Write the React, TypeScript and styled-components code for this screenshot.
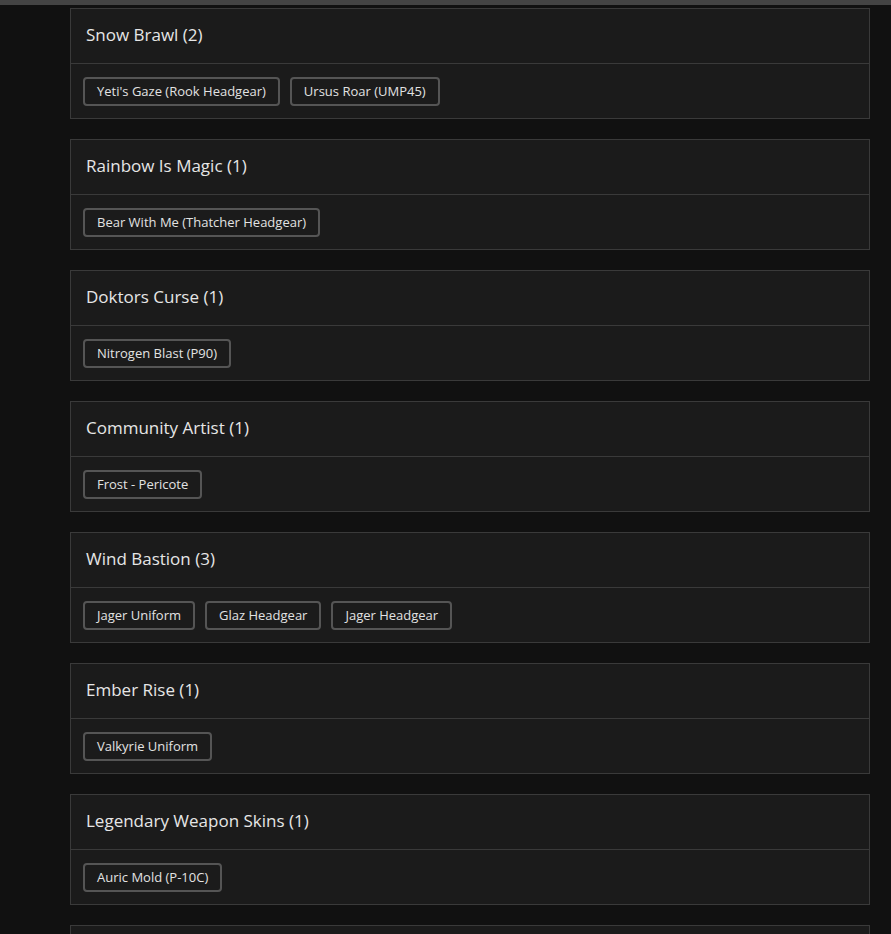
import React from 'react';
import styled, { createGlobalStyle } from 'styled-components';

const GlobalStyle = createGlobalStyle`
  html, body {
    margin: 0;
    padding: 0;
    background: #111111;
    font-family: 'Open Sans', 'Liberation Sans', sans-serif;
  }
`;

interface Collection {
  name: string;
  items: string[];
}

const collections: Collection[] = [
  { name: 'Snow Brawl', items: ["Yeti's Gaze (Rook Headgear)", 'Ursus Roar (UMP45)'] },
  { name: 'Rainbow Is Magic', items: ['Bear With Me (Thatcher Headgear)'] },
  { name: 'Doktors Curse', items: ['Nitrogen Blast (P90)'] },
  { name: 'Community Artist', items: ['Frost - Pericote'] },
  { name: 'Wind Bastion', items: ['Jager Uniform', 'Glaz Headgear', 'Jager Headgear'] },
  { name: 'Ember Rise', items: ['Valkyrie Uniform'] },
  { name: 'Legendary Weapon Skins', items: ['Auric Mold (P-10C)'] },
  { name: 'Shifting Tides', items: ['Kaid Uniform'] },
];

const TopBar = styled.div`
  height: 5px;
  background: #444444;
  margin-bottom: 3px;
`;

const List = styled.div`
  display: flex;
  flex-direction: column;
  gap: 20px;
  width: 800px;
  margin-left: 70px;
`;

const Card = styled.section`
  background: #1b1b1b;
  border: 1px solid #3a3a3a;
`;

const Header = styled.div`
  height: 55px;
  box-sizing: border-box;
  display: flex;
  align-items: center;
  padding: 0 15px 3px;
  border-bottom: 1px solid #3a3a3a;

  h3 {
    margin: 0;
    font-size: 17px;
    font-weight: 500;
    color: #e6e6e6;
  }
`;

const Body = styled.div`
  height: 54px;
  box-sizing: border-box;
  display: flex;
  align-items: center;
  gap: 10px;
  padding: 0 12px;
`;

const Chip = styled.span`
  height: 29px;
  box-sizing: border-box;
  display: inline-flex;
  align-items: center;
  padding: 0 12px 1px;
  border: 2px solid #555555;
  border-radius: 4px;
  color: #e2e2e2;
  font-size: 13px;
`;

export default function App() {
  return (
    <>
      <GlobalStyle />
      <TopBar />
      <List>
        {collections.map((c) => (
          <Card key={c.name}>
            <Header>
              <h3>{c.name} ({c.items.length})</h3>
            </Header>
            <Body>
              {c.items.map((item) => (
                <Chip key={item}>{item}</Chip>
              ))}
            </Body>
          </Card>
        ))}
      </List>
    </>
  );
}
